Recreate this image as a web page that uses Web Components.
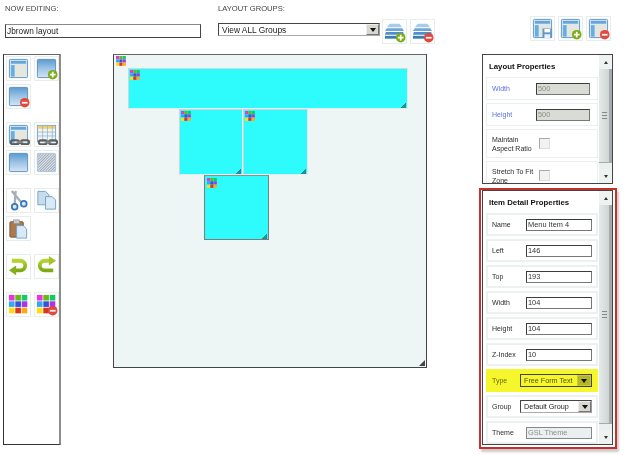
<!DOCTYPE html>
<html>
<head>
<meta charset="utf-8">
<style>
  html, body { margin: 0; padding: 0; background: #fff; }
  body { width: 625px; height: 455px; overflow: hidden; font-family: "Liberation Sans", Arial, sans-serif; }
</style>
</head>
<body>
<layout-editor></layout-editor>

<script>
// shared svg pieces for the toolbar icons
const DEFS = `
  <defs>
    <linearGradient id="blue" x1="0" y1="0" x2="0" y2="1">
      <stop offset="0" stop-color="#5b9bd0"/><stop offset="0.5" stop-color="#9cc4e6"/><stop offset="1" stop-color="#d5e4f3"/>
    </linearGradient>
    <linearGradient id="leaf" x1="0" y1="0" x2="0" y2="1">
      <stop offset="0" stop-color="#b5d334"/><stop offset="1" stop-color="#7cab14"/>
    </linearGradient>
  </defs>`;

const WINDOW_LAYOUT = `
  <rect x="2.5" y="2.5" width="19" height="19" rx="1" fill="#dfe8ee" stroke="#5f97c8"/>
  <rect x="4" y="4" width="16" height="3" fill="#62a6dc"/>
  <rect x="4" y="8.5" width="4" height="12" fill="#6aaee0"/>
  <rect x="9.5" y="8.5" width="10.5" height="11.5" fill="#e6e6dc"/>`;
const WINDOW_PLAIN = `<rect x="2.5" y="2.5" width="19" height="19" rx="1" fill="url(#blue)" stroke="#5f8fbc"/>`;
const PLUS = `<circle cx="18.5" cy="18.5" r="5" fill="#7cac12"/><path d="M18.5 15.5v6M15.5 18.5h6" stroke="#fff" stroke-width="1.8"/>`;
const MINUS = `<circle cx="18.5" cy="18.5" r="5" fill="#e2483d"/><path d="M15.5 18.5h6" stroke="#fff" stroke-width="1.8"/>`;
const CHAIN = `
  <g fill="none" stroke="#5c5c5c" stroke-width="2">
    <rect x="4" y="18" width="8.5" height="4" rx="2"/><rect x="14.5" y="18" width="8.5" height="4" rx="2"/>
  </g><path d="M10 20h7" stroke="#8a8a8a" stroke-width="1.6"/>`;
const LAYERS = `
  <path d="M7 4h10l3 3.5H4z" fill="#a9cbe8"/>
  <path d="M4 8.5h16l2 3H2z" fill="#6da6d8"/>
  <path d="M3 12.5h18l1 3H2z" fill="#4e8fc8"/>
  <path d="M2 16.5h20v3H2z" fill="#3d7db5"/>`;
const PALETTE_CELLS = [
  ['#ee33dd','#66bb11','#11cc66'],
  ['#33aaee','#3355dd','#aa33ee'],
  ['#ffdd11','#dd3322','#ffaa11']
];
function palette(size, gap) {
  const s = size / 3;
  let out = '';
  PALETTE_CELLS.forEach((row, r) => row.forEach((c, i) => {
    out += `<rect x="${i * s}" y="${r * s}" width="${s - gap}" height="${s - gap}" fill="${c}"/>`;
  }));
  return out;
}
const SHEET = (x, y) => `<path d="M${x} ${y}h7l3.5 3.5v9.5h-10.5z" fill="#dbe9f4" stroke="#6ea4cf"/>`;

const ICONS = {
  'window': WINDOW_LAYOUT,
  'window-add': WINDOW_PLAIN + PLUS,
  'window-del': WINDOW_PLAIN + MINUS,
  'window-link': WINDOW_LAYOUT + CHAIN,
  'table-link': `
    <rect x="2.5" y="2.5" width="19" height="17" fill="#f2f4f2" stroke="#7aa4c8"/>
    <rect x="3" y="3" width="18" height="3" fill="#f2cf6a"/>
    <path d="M3 9.5h18M3 13.5h18M8 3v16M13 3v16M18 3v16" stroke="#8db4d6" stroke-width=".8"/>` + CHAIN,
  'plain': WINDOW_PLAIN,
  'hatch': `
    <defs><pattern id="hp" width="2" height="2" patternUnits="userSpaceOnUse" patternTransform="rotate(45)">
      <rect width="2" height="2" fill="#dfe6ee"/><rect width="1" height="2" fill="#9fa9b6"/></pattern></defs>
    <rect x="2.5" y="2.5" width="19" height="19" rx="1" fill="url(#hp)" stroke="#a9c3dc"/>`,
  'cut': `
    <path d="M5 2l10 12M9 2l-1 14" stroke="#a7aeb4" stroke-width="2.4" fill="none"/>
    <circle cx="8" cy="18.5" r="3" fill="#dbe7f0" stroke="#3878b8" stroke-width="1.8"/>
    <circle cx="17.5" cy="15.5" r="3" fill="#dbe7f0" stroke="#3878b8" stroke-width="1.8"/>`,
  'copy': `<path d="M3 2.5h8l3.5 3.5v10.500H3z" fill="#c8dcec" stroke="#6ea4cf"/>` + SHEET(11, 8),
  'paste': `
    <rect x="3" y="5" width="14" height="16" rx="1" fill="#a97a4e" stroke="#7d5a3a"/>
    <rect x="7" y="3" width="6" height="4" fill="#c8c8c8" stroke="#8a8a8a" stroke-width=".6"/>` + SHEET(10, 9),
  'undo': `
    <path d="M5 6h9a5 5 0 0 1 0 10H9" fill="none" stroke="url(#leaf)" stroke-width="4"/>
    <path d="M9.5 11v10L2 16z" fill="#84b01a"/>`,
  'redo': `
    <path d="M15 6H10a5 5 0 0 0 0 10h9" fill="none" stroke="url(#leaf)" stroke-width="4"/>
    <path d="M14.5 1v10L22 6z" fill="#a4c42a"/>`,
  'palette': `<g transform="translate(2 2)">${palette(20, .8)}</g>`,
  'palette-del': `<g transform="translate(2 2)">${palette(20, .8)}</g>` + MINUS,
  'layers-add': LAYERS + PLUS,
  'layers-del': LAYERS + MINUS,
  'layout-save': WINDOW_LAYOUT + `
    <rect x="12" y="12" width="10" height="10" fill="#5f97c8"/><rect x="14" y="12.5" width="6" height="3.5" fill="#fff"/><rect x="14" y="18" width="6" height="4" fill="#eef"/>`,
  'layout-add': WINDOW_LAYOUT + PLUS,
  'layout-del': WINDOW_LAYOUT + MINUS
};

class IconButton extends HTMLElement {
  constructor() {
    super();
    this.attachShadow({ mode: 'open' });
    this.shadowRoot.innerHTML = `
      <style>
        :host { display: block; width: 25px; height: 25px; box-sizing: border-box; border: 1px solid #e6eeec; background: #fff; }
        svg { display: block; width: 23px; height: 23px; filter: blur(.3px); }
      </style>
      <svg viewBox="0 0 24 24">${DEFS}${ICONS[this.getAttribute('icon')] || ''}</svg>
    `;
  }
}
customElements.define('icon-button', IconButton);

class ToolGroup extends HTMLElement {
  constructor() {
    super();
    this.attachShadow({ mode: 'open' });
    this.shadowRoot.innerHTML = `
      <style>
        :host { display: grid; grid-template-columns: 25px 25px; gap: 3px; margin-bottom: 13px; }
      </style>
      <slot></slot>
    `;
  }
}
customElements.define('tool-group', ToolGroup);

class ToolBar extends HTMLElement {
  constructor() {
    super();
    this.attachShadow({ mode: 'open' });
    this.shadowRoot.innerHTML = `
      <style>
        :host { display: block; box-sizing: border-box; width: 58px; height: 391px; border: 1px solid #333; border-right: 2px solid #8d8d8d; border-top-color: #666; padding: 1px 2px; background: #fff; }
      </style>
      <slot></slot>
    `;
  }
}
customElements.define('tool-bar', ToolBar);

class DropDown extends HTMLElement {
  static get observedAttributes() { return ['value']; }
  constructor() {
    super();
    this.attachShadow({ mode: 'open' });
    this.shadowRoot.innerHTML = `
      <style>
        :host { display: flex; box-sizing: border-box; align-items: center; background: #fff; border: 1px solid #444; border-right-color: #999; border-bottom-color: #aaa; font-size: var(--dd-font, 7.2px); color: #222; height: 13px; }
        span { flex: 1; padding-left: 3px; white-space: nowrap; overflow: hidden; filter: blur(.2px); }
        b { display: flex; align-items: center; justify-content: center; width: 13px; height: 100%; box-sizing: border-box; background: #d8d8d0; border: 1px solid #eee; border-right-color: #777; border-bottom-color: #777; }
        b::after { content: ''; border: 3px solid transparent; border-top: 4px solid #111; border-bottom: 0; }
        :host([flagged]) { background: #f6f62c; border-color: #444; color: #55550f; }
        :host([flagged]) b { background: #b5b52a; border-color: #c8c83a; width: 14px; }
      </style>
      <span></span><b></b>
    `;
  }
  attributeChangedCallback(name, oldValue, newValue) {
    this.shadowRoot.querySelector('span').textContent = newValue;
  }
}
customElements.define('drop-down', DropDown);

class PropRow extends HTMLElement {
  constructor() {
    super();
    this.attachShadow({ mode: 'open' });
    this.shadowRoot.innerHTML = `
      <style>
        :host { display: flex; align-items: center; box-sizing: border-box; width: 112px; min-height: 23px; margin-bottom: 3px; padding-left: 5px; border: 1px solid #e9f0ef; background: #fff; font-size: 7px; line-height: 9px; color: #2c2c2c; flex: none; }
        :host([accent]) label { color: #5a72e0; }
        :host([hl]) { background: #f6f62c; border-color: #f6f62c; color: #6b6b10; }
        :host([thin]) { border-width: 2px; border-color: #eaf1f0; padding-left: 4px; }
        label { width: var(--label-width, 44px); flex: none; white-space: nowrap; filter: blur(.2px); }
        input { box-sizing: border-box; height: 12px; width: var(--input-width, 54px); padding: 0 0 0 1px; margin: 0; border: 1px solid #3c3c3c; border-right-color: #777; border-bottom-color: #777; font: 7.4px "Liberation Sans", Arial, sans-serif; color: #333; background: #fff; border-radius: 0; outline: none; filter: blur(.2px); }
        input[disabled] { background: #d8dcd4; color: #8b8f88; }
        :host([soft]) input[disabled] { background: #eaf0ef; border-color: #888; }
        ::slotted(*) { flex: none; }
      </style>
      <label>${this.getAttribute('label').replace('|', '<br>')}</label>
      <slot></slot>
    `;
    const v = this.getAttribute('value');
    if (v !== null) {
      const input = document.createElement('input');
      input.value = v;
      if (this.hasAttribute('readonly-field')) input.disabled = true;
      this.shadowRoot.appendChild(input);
    }
  }
}
customElements.define('prop-row', PropRow);

class CheckMark extends HTMLElement {
  constructor() {
    super();
    this.attachShadow({ mode: 'open' });
    this.shadowRoot.innerHTML = `
      <style>
        :host { display: block; width: 11px; height: 11px; margin-left: 3px; box-sizing: border-box; border: 1px solid #a8a8a8; border-right-color: #ddd; border-bottom-color: #ddd; background: #f1f3f1; }
      </style>
    `;
  }
}
customElements.define('check-mark', CheckMark);

class ScrollPanel extends HTMLElement {
  constructor() {
    super();
    this.attachShadow({ mode: 'open' });
    this.shadowRoot.innerHTML = `
      <style>
        :host { display: flex; box-sizing: border-box; width: 131px; border: 1px solid #444; background: #fff; overflow: hidden; }
        .body { width: 116px; flex: none; padding: 4px 0 0 3px; box-sizing: border-box; display: flex; flex-direction: column; height: 100%; overflow: hidden; }
        h3 { margin: 0 0 0 3px; height: 18px; flex: none; font-size: 7.8px; line-height: 15px; font-weight: bold; color: #111; white-space: nowrap; filter: blur(.2px); }
        .bar { flex: 1; display: flex; flex-direction: column; background: #eaf0ee; }
        .btn { flex: none; height: 14px; display: flex; align-items: center; justify-content: center; background: #eef2f0; }
        .btn::after { content: ''; border: 2.5px solid transparent; }
        .up::after { border-bottom: 3px solid #333; border-top: 0; }
        .down::after { border-top: 3px solid #333; border-bottom: 0; }
        .thumb { flex: 1; margin-bottom: 6px; display: flex; align-items: center; justify-content: center; border-right: 3px solid #a6a9ad; border-bottom: 1px solid #a6a9ad; background: linear-gradient(90deg, #e4eae8, #cfd5d4); }
        .thumb::after { content: ''; width: 5px; height: 5px; border-top: 1px solid #888; border-bottom: 1px solid #888; background: linear-gradient(#888,#888) center / 100% 1px no-repeat; }
      </style>
      <div class="body"><h3>${this.getAttribute('heading')}</h3><slot></slot></div>
      <div class="bar"><div class="btn up"></div><div class="thumb"></div><div class="btn down"></div></div>
    `;
  }
}
customElements.define('scroll-panel', ScrollPanel);

class CanvasItem extends HTMLElement {
  constructor() {
    super();
    this.attachShadow({ mode: 'open' });
    this.shadowRoot.innerHTML = `
      <style>
        :host { position: absolute; box-sizing: border-box; background: #2efbfb; border: 1px solid #e4eceb; border-left-color: #c8d8dc; border-top-color: #c8d8dc; }
        :host([selected]) { border: 1px solid #7c7c7c; border-top-color: #909090; }
        :host([selected]) .pal { left: 2px; top: 2px; }
        .pal { position: absolute; left: 1px; top: 1px; width: 10px; height: 10px; }
        .grip { position: absolute; right: 1px; bottom: 0; width: 5px; height: 5px; }
      </style>
      <svg class="pal" viewBox="0 0 10 10">${palette(10, .15)}</svg>
      <svg class="grip" viewBox="0 0 5 5"><path d="M5 0v5H0v-1h1v-1h1v-1h1v-1h1v-1z" fill="#2a8d92"/></svg>
    `;
  }
}
customElements.define('canvas-item', CanvasItem);

class LayoutCanvas extends HTMLElement {
  constructor() {
    super();
    this.attachShadow({ mode: 'open' });
    this.shadowRoot.innerHTML = `
      <style>
        :host { display: block; position: relative; box-sizing: border-box; width: 314px; height: 314px; background: #eef6f5; border: 1px solid #444; border-top-color: #666; }
        .pal { position: absolute; left: 2px; top: 1px; width: 10px; height: 10px; }
        .grip { position: absolute; right: 1px; bottom: 1px; width: 6px; height: 6px; }
      </style>
      <svg class="pal" viewBox="0 0 10 10">${palette(10, .15)}</svg>
      <slot></slot>
      <svg class="grip" viewBox="0 0 6 6"><path d="M6 0v6H0z" fill="#444"/></svg>
    `;
  }
}
customElements.define('layout-canvas', LayoutCanvas);

class LayoutEditor extends HTMLElement {
  constructor() {
    super();
    this.attachShadow({ mode: 'open' });
    this.shadowRoot.innerHTML = `
      <style>
        :host { display: block; width: 625px; height: 455px; position: relative; font-family: "Liberation Sans", Arial, sans-serif; color: #555; }
        header { display: flex; height: 54px; box-sizing: border-box; }
        .cap { font-size: 7.6px; line-height: 10px; white-space: nowrap; color: #444; margin-top: 4px; filter: blur(.2px); }
        .name { width: 218px; padding-left: 5px; box-sizing: border-box; }
        .name input { display: block; margin: 10px 0 0; box-sizing: border-box; width: 196px; height: 14px; padding: 0 0 0 1px; border: 1px solid #444; border-top-color: #888; border-radius: 0; outline: none; font: 8.3px "Liberation Sans", Arial, sans-serif; color: #222; background: #fff; filter: blur(.2px); }
        .groups .line { display: flex; align-items: flex-start; gap: 3px; margin-top: 5px; --dd-font: 8.4px; }
        .groups drop-down { width: 162px; margin: 4px -1px 0 0; }
        .actions { display: flex; gap: 3px; margin: 16px 0 0 auto; padding-right: 14px; align-self: flex-start; }
        main { display: flex; align-items: flex-start; padding-left: 3px; }
        layout-canvas { margin-left: 52px; }
        aside { margin-left: 55px; display: flex; flex-direction: column; }
        .detail { width: 138px; height: 261px; margin: 4px 0 0 -3px; box-sizing: border-box; border: 2px solid #c8302c; padding: 0 2px 2px 1px; box-shadow: 2px 3px 2px #ccc; display: flex; }
        .detail scroll-panel { height: 255px; flex: none; --label-width: 34px; --input-width: 66px; }
        .layout-props { height: 130px; }
        .detail drop-down { width: 72px; margin-left: -6px; }
      </style>
      <header>
        <div class="name">
          <div class="cap">NOW EDITING:</div>
          <input value="Jbrown layout">
        </div>
        <div class="groups">
          <div class="cap">LAYOUT GROUPS:</div>
          <div class="line">
            <drop-down value="View ALL Groups"></drop-down>
            <icon-button icon="layers-add"></icon-button>
            <icon-button icon="layers-del"></icon-button>
          </div>
        </div>
        <div class="actions">
          <icon-button icon="layout-save"></icon-button>
          <icon-button icon="layout-add"></icon-button>
          <icon-button icon="layout-del"></icon-button>
        </div>
      </header>
      <main>
        <tool-bar>
          <tool-group>
            <icon-button icon="window"></icon-button>
            <icon-button icon="window-add"></icon-button>
            <icon-button icon="window-del"></icon-button>
          </tool-group>
          <tool-group>
            <icon-button icon="window-link"></icon-button>
            <icon-button icon="table-link"></icon-button>
            <icon-button icon="plain"></icon-button>
            <icon-button icon="hatch"></icon-button>
          </tool-group>
          <tool-group>
            <icon-button icon="cut"></icon-button>
            <icon-button icon="copy"></icon-button>
            <icon-button icon="paste"></icon-button>
          </tool-group>
          <tool-group>
            <icon-button icon="undo"></icon-button>
            <icon-button icon="redo"></icon-button>
          </tool-group>
          <tool-group>
            <icon-button icon="palette"></icon-button>
            <icon-button icon="palette-del"></icon-button>
          </tool-group>
        </tool-bar>
        <layout-canvas>
          <canvas-item style="left:14px;top:13px;width:280px;height:41px"></canvas-item>
          <canvas-item style="left:65px;top:54px;width:64px;height:66px"></canvas-item>
          <canvas-item style="left:129px;top:54px;width:65px;height:66px"></canvas-item>
          <canvas-item selected style="left:90px;top:120px;width:65px;height:65px"></canvas-item>
        </layout-canvas>
        <aside>
          <scroll-panel class="layout-props" heading="Layout Properties">
            <prop-row accent label="Width" value="500" readonly-field></prop-row>
            <prop-row accent label="Height" value="500" readonly-field></prop-row>
            <prop-row label="Maintain|Aspect Ratio" style="min-height:29px"><check-mark></check-mark></prop-row>
            <prop-row label="Stretch To Fit|Zone" style="min-height:29px"><check-mark></check-mark></prop-row>
          </scroll-panel>
          <div class="detail">
            <scroll-panel heading="Item Detail Properties">
              <prop-row thin label="Name" value="Menu Item 4"></prop-row>
              <prop-row thin label="Left" value="146"></prop-row>
              <prop-row thin label="Top" value="193"></prop-row>
              <prop-row thin label="Width" value="104"></prop-row>
              <prop-row thin label="Height" value="104"></prop-row>
              <prop-row thin label="Z-Index" value="10"></prop-row>
              <prop-row hl label="Type"><drop-down flagged value="Free Form Text"></drop-down></prop-row>
              <prop-row thin label="Group"><drop-down value="Default Group"></drop-down></prop-row>
              <prop-row thin soft label="Theme" value="GSL Theme" readonly-field></prop-row>
            </scroll-panel>
          </div>
        </aside>
      </main>
    `;
  }
}
customElements.define('layout-editor', LayoutEditor);
</script>
</body>
</html>
